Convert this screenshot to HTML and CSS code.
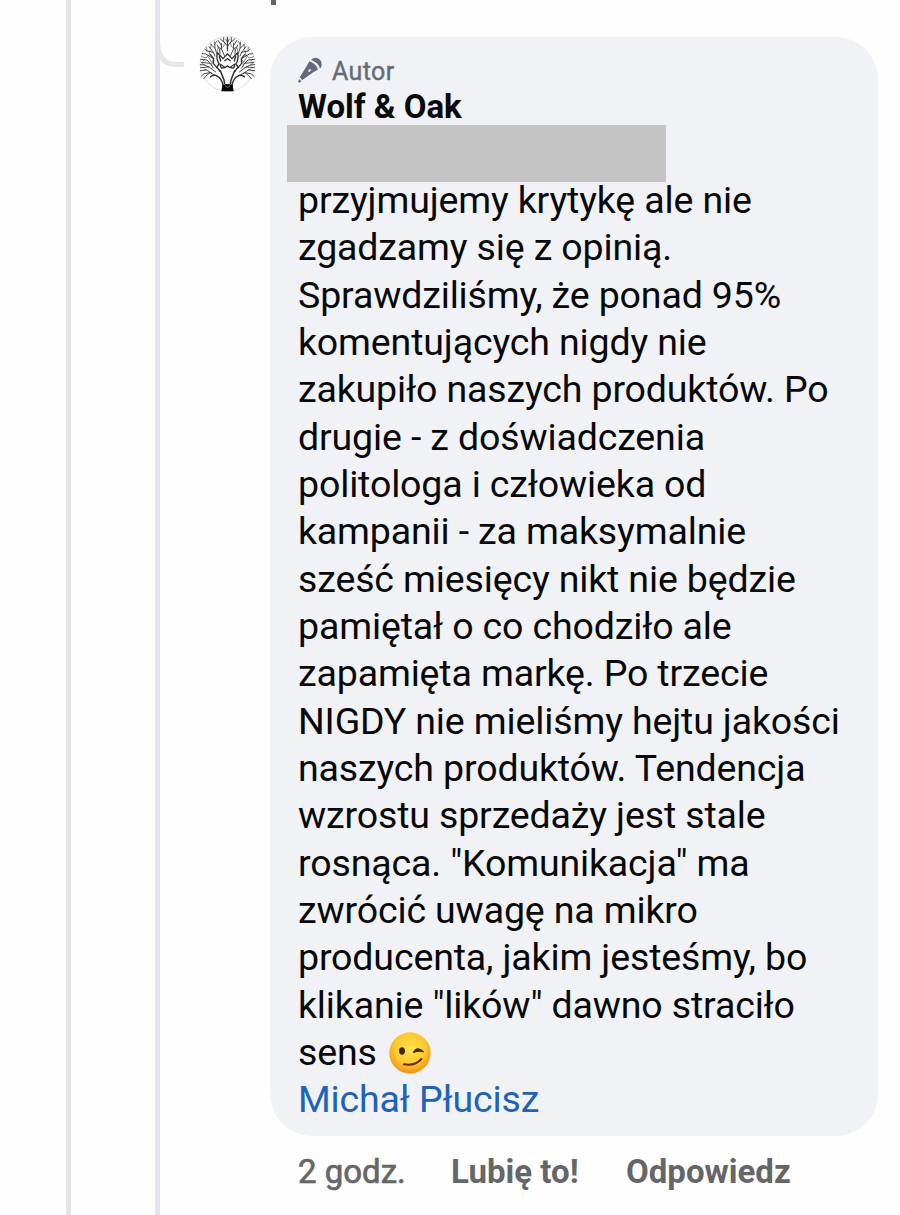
FILE: index.html
```
<!DOCTYPE html>
<html lang="pl">
<head>
<meta charset="utf-8">
<title>Komentarz – Wolf &amp; Oak</title>
<link rel="stylesheet" href="styles.css">
</head>
<body>
<main class="thread">
  <div class="rail rail-outer"></div>
  <div class="rail rail-inner"></div>
  <svg class="connector" viewBox="0 0 28 70" aria-hidden="true"><path d="M.5 40Q.5 64.500 19 64.500H27" fill="none" stroke="#e4e6ec" stroke-width="5"/></svg>
  <svg class="avatar" viewBox="24 21 174 174" role="img" aria-label="Wolf &amp; Oak">
    <defs>
      <g id="half">
        <path stroke-width="4.500" d="M100 176C98 160 92 149 79 143Q70 139 62 146M104 166C102 150 94 138 91 128"/>
        <path stroke-width="4" d="M82 74L99 92M82 74Q78 92 87 108L80 118Q86 122 90 130M99 92L112 78M104 98L112 92M90 108Q98 112 105 119L94 120L91 112M105 119L112 114"/>
        <path stroke-width="4" d="M88 84L92 99M80 118L70 106L71 92L61 80"/>
        <path stroke-width="2.600" d="M79 143L60 134L42 137L33 145M65 136L50 126L31 128M77 132L57 117L32 119M70 120L61 106L34 103M71 92L47 78L37 77M61 106L51 96L32 94M75 84L70 73L57 56M80 76L75 61L74 42M70 73L51 69L45 64M90 78L89 65L82 51M103 82L95 64L94 46M112 68V29M112 54L101 40V29M105 45L91 33M94 52L84 37M75 61L62 49M57 117L44 111L31 110M60 134L48 144L41 152"/>
        <path stroke-width="1.800" d="M89 65L101 55L103 48M74 50L80 40M62 61L63 49M55 82L48 90L35 86M51 69L50 58M64 102L55 87M45 95L39 99M44 111L36 106M50 126L42 123M94 64L87 57M112 43L107 33M82 70L84 59M65 112L67 98M57 83L60 67"/>
      </g>
    </defs>
    <circle cx="112.500" cy="108" r="82" fill="#fff" stroke="#ddd" stroke-width="3"/>
    <g fill="none" stroke="#303030" stroke-linecap="round" stroke-linejoin="round">
      <use href="#half"/>
      <use href="#half" transform="translate(225 0) scale(-1 1)"/>
    </g>
    <path d="M97 172Q112 164 128 172L131 190H94Z" fill="#080808"/>
    <path d="M106 174L113 178L120 174" fill="none" stroke="#bbb" stroke-width="2"/>
  </svg>
  <section class="comment">
    <div class="previous" aria-hidden="true"></div>
    <article class="bubble">
      <div class="role">
        <svg class="mic" viewBox="0 0 78 78" aria-hidden="true">
          <g fill="#646a78">
            <path d="M39 9Q47 1 57 3Q71 7 71 23Q71 30 66 35Q61 16 39 9Z"/>
            <path d="M34 13Q53 18 60 38L47 45L13 69L5 61L26 28Z"/>
            <path d="M4 66L10 72L5 77L0 74Z"/>
          </g>
          <path d="M30 42L36 35L40 39L33 46Z" fill="#f0f2f6"/>
        </svg>
        <span>Autor</span>
      </div>
      <h1 class="name">Wolf &amp; Oak</h1>
      <div class="redacted"></div>
      <p class="text">
        <span>przyjmujemy krytykę ale nie</span>
        <span>zgadzamy się z opinią.</span>
        <span>Sprawdziliśmy, że ponad 95%</span>
        <span>komentujących nigdy nie</span>
        <span>zakupiło naszych produktów. Po</span>
        <span>drugie - z doświadczenia</span>
        <span>politologa i człowieka od</span>
        <span>kampanii - za maksymalnie</span>
        <span>sześć miesięcy nikt nie będzie</span>
        <span>pamiętał o co chodziło ale</span>
        <span>zapamięta markę. Po trzecie</span>
        <span>NIGDY nie mieliśmy hejtu jakości</span>
        <span>naszych produktów. Tendencja</span>
        <span>wzrostu sprzedaży jest stale</span>
        <span>rosnąca. "Komunikacja" ma</span>
        <span>zwrócić uwagę na mikro</span>
        <span>producenta, jakim jesteśmy, bo</span>
        <span>klikanie "lików" dawno straciło</span>
        <span class="with-emoji">sens <svg class="emoji" viewBox="0 0 126 126" role="img" aria-label="mrugnięcie">
          <defs>
            <radialGradient id="face" cx=".5" cy=".4" r=".62">
              <stop offset="0" stop-color="#ffe34d"/>
              <stop offset=".6" stop-color="#fdc930"/>
              <stop offset="1" stop-color="#f28a16"/>
            </radialGradient>
          </defs>
          <circle cx="63" cy="63" r="62" fill="url(#face)"/>
          <ellipse cx="39" cy="57" rx="9" ry="11" fill="#422b0d"/>
          <path d="M74 61Q84 41 103 59Q88 54 74 61Z" fill="#422b0d" stroke="#422b0d" stroke-width="4" stroke-linejoin="round"/>
          <path d="M45 97Q78 103 97 81" fill="none" stroke="#6b2b0b" stroke-width="6" stroke-linecap="round"/>
        </svg></span>
        <a class="mention">Michał Płucisz</a>
      </p>
    </article>
    <footer class="actions">
      <span class="time">2 godz.</span>
      <span class="like">Lubię to!</span>
      <span class="reply">Odpowiedz</span>
    </footer>
  </section>
</main>
</body>
</html>
```
FILE: styles.css
```
* { box-sizing: border-box; }
body { margin: 0; background: #fefefe; font-family: Roboto, "Liberation Sans", sans-serif; }
.thread { display: flex; align-items: flex-start; width: 900px; height: 1215px; overflow: hidden; }
.rail { flex: none; width: 5px; height: 1215px; background: #e4e4e9; }
.rail-outer { margin-left: 66px; }
.rail-inner { margin-left: 84px; background: #e3e4ec; }
.connector { flex: none; width: 28px; height: 70px; margin-left: -3px; }
.avatar { flex: none; width: 58px; height: 58px; margin: 35px 14px 0 13px; }
.comment { flex: none; width: 608px; }
.previous { width: 5px; height: 5px; margin: 0 0 32px 1px; background: #666; }
.bubble { height: 1099px; padding: 20px 28px 0; border-radius: 42px; background: #f0f2f6; }
.role { display: flex; align-items: center; gap: 8px; height: 30px; color: #646a78; font-size: 25px; line-height: 30px; letter-spacing: .4px; -webkit-text-stroke: .4px #646a78; }
.mic { width: 26px; height: 26px; margin-top: -5px; }
.name { margin: 0; height: 38px; color: #080809; font-size: 33px; font-weight: 700; line-height: 40px; white-space: nowrap; }
.redacted { width: 379px; height: 57px; margin: 0 0 -5px -11px; background: #c3c3c3; }
.text { margin: 0; color: #080809; font-size: 37.5px; line-height: 47.34px; letter-spacing: -.14px; }
.text > * { display: block; height: 47.34px; white-space: nowrap; }
.text > .with-emoji { display: flex; align-items: center; gap: 12px; }
.emoji { width: 42px; height: 42px; }
.mention { color: #2162b5; }
.actions { display: flex; height: 79px; padding: 14px 0 0 28px; color: #656667; font-size: 33px; font-weight: 700; line-height: 44px; white-space: nowrap; }
.time { width: 153px; font-weight: 400; -webkit-text-stroke: .7px #656667; }
.like { width: 175px; }
```
